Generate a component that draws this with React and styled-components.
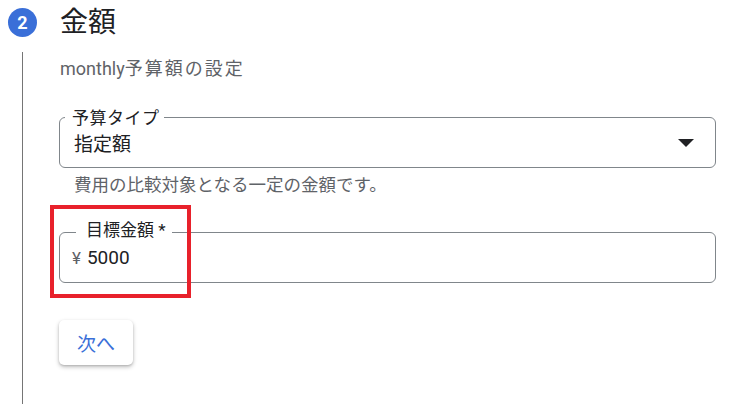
import styled, { createGlobalStyle } from "styled-components";

const Global = createGlobalStyle`
  body {
    margin: 0;
    background: #fff;
    font-family: Roboto, "Noto Sans CJK JP", sans-serif;
    color: #202124;
  }
`;

const Page = styled.div`
  position: relative;
  width: 740px;
  height: 409px;
  padding-right: 24px;
  box-sizing: border-box;
  overflow: hidden;
`;

const StepHeader = styled.div`
  display: flex;
  align-items: center;
  padding: 8px 0 0 8px;
`;

const StepBadge = styled.div`
  width: 29px;
  height: 29px;
  border-radius: 50%;
  background: #3a6fd8;
  color: #fff;
  font-size: 18px;
  font-weight: 700;
  display: flex;
  align-items: center;
  justify-content: center;
`;

const StepTitle = styled.h2`
  margin: 0 0 0 23px;
  font-size: 28px;
  line-height: 29px;
  font-weight: 400;
  color: #202124;
`;

const StepBody = styled.div`
  margin: 15px 0 0 22px;
  border-left: 1px solid #757575;
  padding: 5px 0 39px 37px;
`;

const Subtitle = styled.p`
  margin: 0;
  font-size: 18px;
  line-height: 24px;
  color: #5f6368;
`;

const Wide = styled.span`
  letter-spacing: ${(p) => p.$gap}px;
`;

const Field = styled.div`
  position: relative;
  margin: ${(p) => p.$top}px 0 0 -1px;
  height: 51px;
  box-sizing: border-box;
  border: 1px solid #80868b;
  border-radius: 6px;
  display: flex;
  align-items: center;
  padding: 0 21px 0 ${(p) => p.$pad}px;
`;

const FieldLabel = styled.span`
  position: absolute;
  top: ${(p) => p.$top}px;
  left: ${(p) => p.$left}px;
  padding: ${(p) => p.$pad};
  background: #fff;
  font-size: 17px;
  line-height: 18px;
  color: #202124;
`;

const Value = styled.span`
  flex: 1;
  font-size: 19px;
  color: #202124;
`;

const Prefix = styled.span`
  font-size: 17px;
  color: #5f6368;
  margin-right: 6px;
`;

const Helper = styled.p`
  margin: 7px 0 0 14px;
  font-size: 17.5px;
  line-height: 20px;
  color: #5f6368;
`;

const NextButton = styled.button`
  margin-top: 37px;
  margin-left: -1px;
  width: 74px;
  height: 45px;
  border: none;
  border-radius: 5px;
  background: #fff;
  color: #3a6fd8;
  font-family: inherit;
  font-size: 19px;
  box-shadow: 0 2px 4px rgba(0, 0, 0, 0.25), 0 1px 2px rgba(0, 0, 0, 0.12);
  cursor: pointer;
`;

const Highlight = styled.div`
  position: absolute;
  left: 50px;
  top: 205px;
  width: 141px;
  height: 93px;
  box-sizing: border-box;
  border: 4px solid #e8212b;
  pointer-events: none;
`;

const DropArrow = () => (
  <svg width="16" height="8" viewBox="0 0 16 8">
    <polygon points="0,0 16,0 8,8" fill="#202124" />
  </svg>
);

export default function App() {
  return (
    <Page>
      <Global />
      <StepHeader>
        <StepBadge>2</StepBadge>
        <StepTitle>金額</StepTitle>
      </StepHeader>
      <StepBody>
        <Subtitle>
          monthly<Wide $gap={2}>予算額の設定</Wide>
        </Subtitle>
        <Field $top={36} $pad={14}>
          <FieldLabel $top={-9} $left={5} $pad="0 4px 0 7px">
            <Wide $gap={0.5}>予算タイプ</Wide>
          </FieldLabel>
          <Value>指定額</Value>
          <DropArrow />
        </Field>
        <Helper>費用の比較対象となる一定の金額です。</Helper>
        <Field $top={37} $pad={12}>
          <FieldLabel $top={-12} $left={16} $pad="0 6px 0 10px">
            目標金額 *
          </FieldLabel>
          <Prefix>¥</Prefix>
          <Value>5000</Value>
        </Field>
        <NextButton>次へ</NextButton>
      </StepBody>
      <Highlight />
    </Page>
  );
}
